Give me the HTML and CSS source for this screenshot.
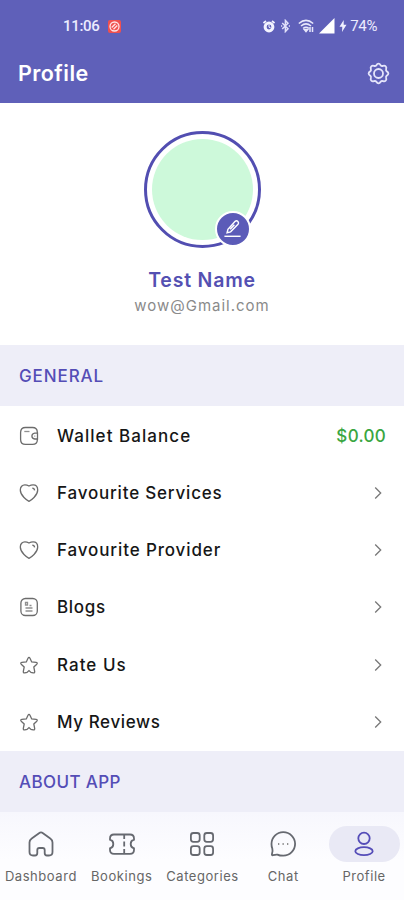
FILE: index.html
```
<!DOCTYPE html>
<html lang="en">
<head>
<meta charset="utf-8">
<meta name="viewport" content="width=device-width, initial-scale=1">
<title>Profile</title>
<link rel="stylesheet" href="styles.css">
</head>
<body>
<svg class="defs" aria-hidden="true">
  <symbol id="heart" viewBox="0 0 20 20"><path d="M10 18.300C8.300 17.600 1.300 12.600 1.300 7 1.300 3.800 3.300 1.900 5.900 1.900 7.700 1.900 8.900 2.400 10 3 11.100 2.400 12.300 1.900 14.100 1.900 16.700 1.900 18.700 3.800 18.700 7 18.700 12.600 11.700 17.600 10 18.300Z"/><path d="M13.300 5.100C14.800 5.200 15.500 6.100 15.600 7.400"/></symbol>
  <symbol id="star" viewBox="0 0 20 20"><path d="M8.900 3.500Q10 1.300 11.100 3.500L12.700 7 17.200 7.400Q19 7.800 17.800 9.200L14.800 12 15.700 16.500Q15.800 18.300 14.200 17.900L12 17.500 10 15.600 8 17.500 5.800 17.900Q4.200 18.300 4.300 16.500L5.200 12 2.200 9.200Q1 7.800 2.800 7.400L7.300 7Z"/></symbol>
  <symbol id="chevron" viewBox="0 0 8 14"><path d="M1.200 1.500 6.700 7 1.200 12.500"/></symbol>
</svg>
<div class="screen">
  <header class="header">
    <div class="status">
      <span class="clock">11:06</span>
      <svg class="blocked" viewBox="0 0 13 13"><rect width="13" height="13" rx="2" fill="#f0504f"/><g fill="none" stroke="#ffe3e6" stroke-width="1.300"><circle cx="6.500" cy="6.500" r="4.500"/><path d="M3.700 7.500 7.500 3.700M5.500 9.300 9.300 5.500"/></g></svg>
      <svg class="alarm" viewBox="0 0 12 13"><circle cx="6" cy="7" r="3.900" fill="none" stroke="#f3f3ff" stroke-width="3"/><path d="M.5 3 3 1M11.500 3 9 1" stroke="#f3f3ff" stroke-width="1.700"/><path d="M6 4.800V7.200L7.800 8" fill="none" stroke="#f3f3ff"/></svg>
      <svg class="bluetooth" viewBox="0 0 9 14"><path d="M1.200 4 7 9.700 4.400 12.500V1.500L7 4.300 1.200 10" fill="none" stroke="#e0e0fa" stroke-width="1.500"/><path d="M0 7h1.200M7.800 7H9" stroke="#e0e0fa" stroke-width="1.300"/></svg>
      <svg class="wifi" viewBox="0 0 17 14"><g fill="none" stroke="#e6e6fb" stroke-width="1.500"><path d="M.8 4.500Q8 -1.700 15.200 4.500M3 7Q8 2.800 13 7M5.200 9.400Q8 7 10.800 9.400"/><path d="M6.300 10.500H9.700L8 12.500ZM12 8V13M14.500 8V13"/></g></svg>
      <svg class="signal" viewBox="0 0 16 16"><path d="M15.500 0V15.500H0Z" fill="#fff"/></svg>
      <svg class="bolt" viewBox="0 0 8 12"><path d="M4.700 0 .5 6.800H3.300L3 12 7.500 4.800H4.700Z" fill="#f0f0ff"/></svg>
      <span class="battery">74%</span>
    </div>
    <div class="titlebar">
      <h1 class="title">Profile</h1>
      <svg class="gear" viewBox="0 0 24 24"><path d="M12 1.700C13.400 1.700 13.800 2.600 14.300 3.500 15 4.300 15.800 4.300 16.800 4 18 3.600 18.900 3.900 19.500 4.500 20.100 5.100 20.400 6 20 7.200 19.700 8.200 19.700 9 20.500 9.700 21.400 10.200 22.300 10.600 22.300 12 22.300 13.400 21.400 13.800 20.500 14.300 19.700 15 19.700 15.800 20 16.800 20.400 18 20.100 18.900 19.500 19.500 18.900 20.100 18 20.400 16.800 20 15.800 19.700 15 19.700 14.300 20.500 13.800 21.400 13.400 22.300 12 22.300 10.600 22.300 10.200 21.400 9.700 20.500 9 19.700 8.200 19.700 7.200 20 6 20.400 5.100 20.100 4.500 19.500 3.900 18.900 3.600 18 4 16.800 4.300 15.800 4.300 15 3.500 14.300 2.600 13.800 1.700 13.400 1.700 12 1.700 10.600 2.600 10.200 3.500 9.700 4.300 9 4.300 8.200 4 7.200 3.600 6 3.900 5.100 4.500 4.500 5.100 3.900 6 3.600 7.200 4 8.200 4.300 9 4.300 9.700 3.500 10.200 2.600 10.600 1.700 12 1.700Z"/><circle cx="12" cy="12" r="4.700"/></svg>
    </div>
  </header>

  <section class="user">
    <div class="avatar">
      <div class="photo"></div>
      <div class="edit"><svg viewBox="0 0 20 20"><path d="M4.300 14.400 5.200 10.800 12.800 2.500Q14.300 1.300 15.700 2.600 17 4.100 15.800 5.600L8 13.500ZM7.500 10.800 12 6"/><path d="M1.500 18.200H18.500"/></svg></div>
    </div>
    <div class="name">Test Name</div>
    <div class="email">wow@Gmail.com</div>
  </section>

  <h2 class="section">GENERAL</h2>
  <ul class="list">
    <li class="row"><svg class="icon" viewBox="0 0 20 20"><path d="M18.300 7V6Q18.300 1.500 13.500 1.500H6.500Q1.600 1.500 1.600 6.500V13.500Q1.600 18.400 6.500 18.400H13.500Q18.300 18.400 18.300 14V13"/><path d="M18.500 7.200H15.700Q12.900 7.600 12.900 10.100 12.900 12.700 15.700 13H18.500ZM15.500 10.100H16.200"/><path class="faint" d="M5.300 5.500H10.500"/></svg><span class="label wallet">Wallet Balance</span><span class="amount">$0.00</span></li>
    <li class="row"><svg class="icon"><use href="#heart"/></svg><span class="label services">Favourite Services</span><svg class="chevron"><use href="#chevron"/></svg></li>
    <li class="row"><svg class="icon"><use href="#heart"/></svg><span class="label provider">Favourite Provider</span><svg class="chevron"><use href="#chevron"/></svg></li>
    <li class="row"><svg class="icon" viewBox="0 0 20 20"><rect x="1.900" y="1.500" width="16.400" height="17" rx="4.500"/><path class="faint" d="M6.500 5.500H8.500V8H6.500ZM10.500 8.500H12.500M6.500 11H13.500M6.500 14H13.500"/></svg><span class="label">Blogs</span><svg class="chevron"><use href="#chevron"/></svg></li>
    <li class="row"><svg class="icon"><use href="#star"/></svg><span class="label rate">Rate Us</span><svg class="chevron"><use href="#chevron"/></svg></li>
    <li class="row"><svg class="icon"><use href="#star"/></svg><span class="label reviews">My Reviews</span><svg class="chevron"><use href="#chevron"/></svg></li>
  </ul>
  <h2 class="section about">ABOUT APP</h2>

  <nav class="nav">
    <a class="tab"><span class="pill"><svg viewBox="0 0 28 28"><path d="M12 3.200Q14 1.700 16 3.200L23.300 8.500Q25.500 10 25.500 12.500V22Q25.500 25.500 22 25.500H20Q17.700 25.500 17.700 23V20Q17.700 18 15.700 18H12.300Q10.300 18 10.300 20V23Q10.300 25.500 8 25.500H6Q2.500 25.500 2.500 22V12.500Q2.500 10 4.700 8.500Z"/></svg></span><span class="caption">Dashboard</span></a>
    <a class="tab"><span class="pill"><svg viewBox="0 0 28 28"><path d="M6 4.500H22Q26 4.500 26 8.500V9.700Q22.700 10.500 22.700 14T26 18.300V20Q26 23.800 22 23.800H6Q2 23.800 2 20V18.300Q5.300 17.500 5.300 14T2 9.700V8.500Q2 4.500 6 4.500Z"/><path d="M16.200 5V9M16.200 11.500V16.500M16.200 19V23.500"/></svg></span><span class="caption">Bookings</span></a>
    <a class="tab"><span class="pill"><svg viewBox="0 0 28 28"><rect x="2.900" y="3" width="8.800" height="8.800" rx="2.500"/><rect x="16.300" y="3" width="8.800" height="8.800" rx="2.500"/><rect x="2.900" y="16.200" width="8.800" height="8.800" rx="2.500"/><rect x="16.300" y="16.200" width="8.800" height="8.800" rx="2.500"/></svg></span><span class="caption">Categories</span></a>
    <a class="tab"><span class="pill"><svg viewBox="0 0 28 28"><path d="M2.500 14A11.800 11.800 0 1 1 14.300 25.700Q10.500 25.700 8.500 24.600 7 24.300 4 25.200 2.500 25.500 3 23.800 4 21 3.300 18.500 2.500 16.500 2.500 14Z"/><path class="faint" d="M9 14H10.300M13.500 14H14.800M18 14H19.300"/></svg></span><span class="caption">Chat</span></a>
    <a class="tab active"><span class="pill"><svg viewBox="0 0 28 28"><circle cx="14" cy="8.300" r="5.700"/><ellipse cx="14" cy="21.200" rx="8.700" ry="4"/></svg></span><span class="caption">Profile</span></a>
  </nav>
</div>
</body>
</html>
```
FILE: styles.css
```
* { box-sizing: border-box; }
body { margin: 0; background: #fff; font-family: Inter, "Liberation Sans", sans-serif; }
.defs { position: absolute; width: 0; height: 0; }
.screen { width: 404px; height: 900px; overflow: hidden; display: flex; flex-direction: column; }
h1, h2, ul { margin: 0; padding: 0; font-weight: 500; }

.header { height: 103px; flex: none; background: #5f60b9; color: #fff; }
.status { display: flex; align-items: center; height: 52px; padding: 0 27px 0 63px; font: 500 15px/1 Roboto, sans-serif; color: #ececff; }
.clock { width: 45px; letter-spacing: -.3px; }
.blocked { width: 13px; height: 13px; margin-right: auto; }
.alarm { width: 12px; height: 13px; margin-right: 6px; }
.bluetooth { width: 9px; height: 14px; margin-right: 8px; }
.wifi { width: 17px; height: 14px; margin-right: 4px; }
.signal { width: 16px; height: 16px; margin-right: 4px; }
.bolt { width: 8px; height: 12px; margin-right: 3px; }
.battery { letter-spacing: -.4px; font-weight: 400; }
.titlebar { display: flex; align-items: center; justify-content: space-between; height: 42px; padding: 0 14.500px 0 18px; }
.title { font-size: 21.500px; font-weight: 600; letter-spacing: .45px; }
.gear { width: 23px; height: 23px; fill: none; stroke: #e4e4fa; stroke-width: 1.900; }

.user { height: 242px; flex: none; display: flex; flex-direction: column; align-items: center; padding-top: 27.500px; }
.avatar { position: relative; width: 117px; height: 117px; padding: 5px; border: 3px solid #524eb1; border-radius: 50%; }
.photo { width: 101px; height: 101px; border-radius: 50%; background: #cdf9da; }
.edit { position: absolute; right: 7px; bottom: -2px; width: 36px; height: 36px; display: flex; align-items: center; justify-content: center; border: 2px solid #fff; border-radius: 50%; background: #5b5bb8; }
.edit svg { width: 19px; height: 19px; fill: none; stroke: #fff; stroke-width: 1.500; }
.name { margin-top: 19px; font-size: 19.500px; line-height: 26px; font-weight: 600; letter-spacing: .8px; color: #5450b2; }
.email { margin-top: 3.500px; font-size: 15px; line-height: 20px; letter-spacing: 1px; color: #8a8a8a; }

.section { height: 61px; flex: none; padding-left: 19px; line-height: 62px; font-size: 17px; letter-spacing: .9px; color: #544db6; background: #eeeef8; }
.about { letter-spacing: .4px; }
.list { height: 344.500px; flex: none; list-style: none; display: grid; grid-template-rows: repeat(6, 1fr); padding-top: 1px; }
.row { display: flex; align-items: center; padding: 0 18px 0 18.500px; font-size: 17px; font-weight: 500; color: #161616; }
.icon { width: 20px; height: 20px; margin-right: 18.500px; fill: none; stroke: #6c6c6c; stroke-width: 1.300; }
.label { flex: 1; letter-spacing: .7px; }
.wallet { letter-spacing: 1.060px; }
.services { letter-spacing: .81px; }
.provider { letter-spacing: .87px; }
.rate { letter-spacing: 1.050px; }
.reviews { letter-spacing: .6px; }
.amount { color: #3aa641; letter-spacing: .3px; }
.chevron { width: 8px; height: 14px; margin-right: 4px; fill: none; stroke: #777; stroke-width: 1.300; }
.faint { stroke: #909090; }

.nav { flex: 1; display: grid; grid-template-columns: repeat(5, 1fr); padding-top: 14.500px; background: linear-gradient(#f7f7fd, #fdfdff 55%); }
.tab { display: flex; flex-direction: column; align-items: center; padding-left: 1px; }
.pill { width: 71px; height: 36px; display: flex; align-items: center; justify-content: center; border-radius: 18px; }
.pill svg { width: 28px; height: 28px; fill: none; stroke: #666970; stroke-width: 1.800; }
.active .pill { background: #e9e9f5; }
.active svg { stroke: #554db8; }
.caption { margin-top: 6px; font-size: 13px; line-height: 16px; letter-spacing: .55px; color: #666; white-space: nowrap; }
```
